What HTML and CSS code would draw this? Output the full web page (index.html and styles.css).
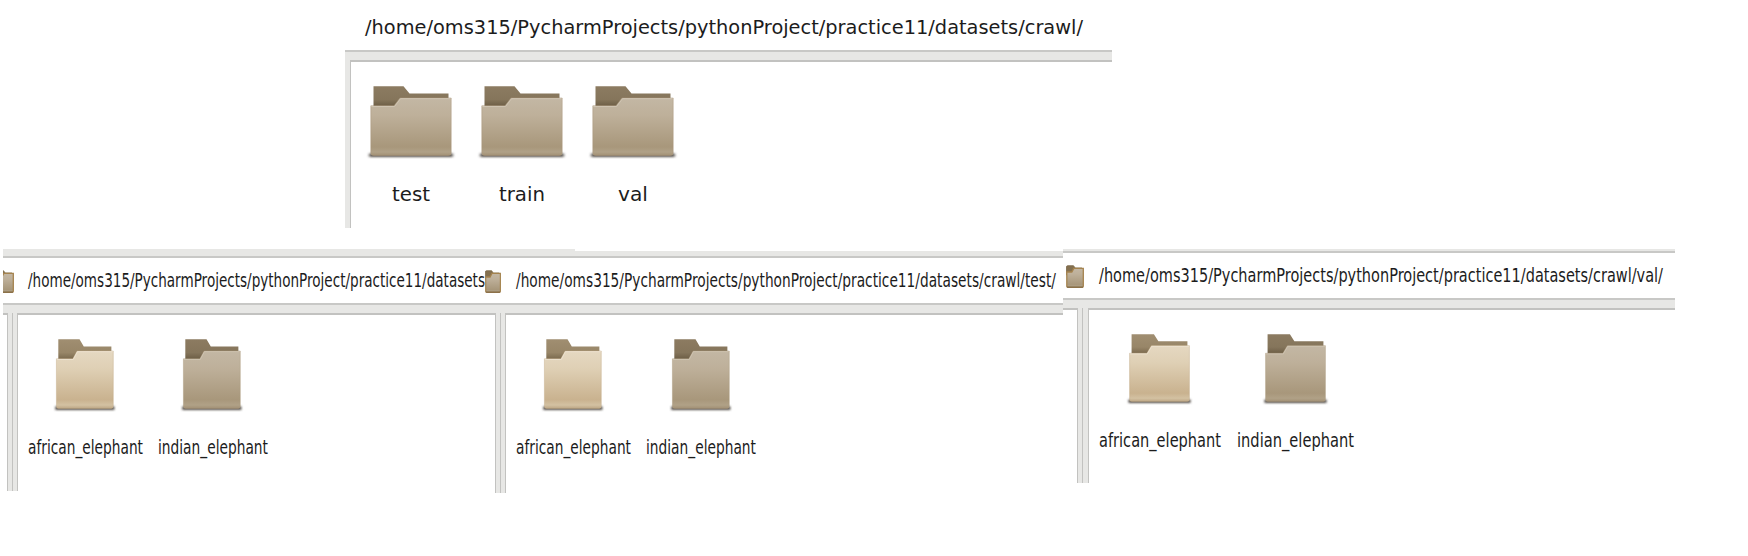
FILE: index.html
```html
<!DOCTYPE html>
<html lang="en">
<head>
<meta charset="utf-8">
<title>Dataset folders</title>
<link rel="stylesheet" href="styles.css">
</head>
<body>
<svg class="defs" width="0" height="0" aria-hidden="true">
  <defs>
    <linearGradient id="back" x1="0" y1="0" x2="0" y2="1"><stop offset="0" stop-color="#8c7b61"/><stop offset=".35" stop-color="#85755b"/><stop offset=".52" stop-color="#6d5e46"/></linearGradient>
    <linearGradient id="backLight" x1="0" y1="0" x2="0" y2="1"><stop offset="0" stop-color="#a08e71"/><stop offset=".35" stop-color="#988668"/><stop offset=".52" stop-color="#7b6a4e"/></linearGradient>
    <linearGradient id="front" x1="0" y1="0" x2="0" y2="1"><stop offset="0" stop-color="#c3b7a4"/><stop offset=".3" stop-color="#beb09a"/><stop offset=".85" stop-color="#a8977b"/><stop offset=".94" stop-color="#b0a187"/><stop offset="1" stop-color="#a29074"/></linearGradient>
    <linearGradient id="frontLight" x1="0" y1="0" x2="0" y2="1"><stop offset="0" stop-color="#e5d8c1"/><stop offset=".3" stop-color="#dfd0b5"/><stop offset=".85" stop-color="#c9b28f"/><stop offset=".94" stop-color="#d3c1a2"/><stop offset="1" stop-color="#bda684"/></linearGradient>
    <filter id="soft" x="-10%" y="-100%" width="120%" height="300%"><feGaussianBlur stdDeviation="1.6 0.9"/></filter>
  </defs>
  <symbol id="folder" viewBox="0 0 90 76" preserveAspectRatio="none">
    <rect x="3" y="69.3" width="84" height="3.6" rx="1.5" fill="#55504a" filter="url(#soft)"/>
    <path d="M7.5 2.3H37.5L43.5 9.6H82.5V40H7.5Z" fill="url(#back)"/>
    <path d="M4.8 21.8H28L34 14H85.2V69Q85.2 71.5 82.5 71.5H7.5Q4.8 71.5 4.8 69Z" fill="url(#front)" stroke="#a9977b" stroke-width=".5"/>
    <path d="M5.4 22.5H28.6L34.6 14.7H84.5" fill="none" stroke="#cfc4b2" stroke-width="1"/>
  </symbol>
  <symbol id="folder-light" viewBox="0 0 90 76" preserveAspectRatio="none">
    <rect x="3" y="69.3" width="84" height="3.6" rx="1.5" fill="#55504a" filter="url(#soft)"/>
    <path d="M7.5 2.3H37.5L43.5 9.6H82.5V40H7.5Z" fill="url(#backLight)"/>
    <path d="M4.8 21.8H28L34 14H85.2V69Q85.2 71.5 82.5 71.5H7.5Q4.8 71.5 4.8 69Z" fill="url(#frontLight)" stroke="#c2ab86" stroke-width=".5"/>
    <path d="M5.4 22.5H28.6L34.6 14.7H84.5" fill="none" stroke="#ede3d1" stroke-width="1"/>
  </symbol>
  <symbol id="folder-small" viewBox="0 0 18 23" preserveAspectRatio="none">
    <path d="M.5 2Q.5.7 1.7.7H7.5L9.2 3H16V10H.5Z" fill="#84704f" stroke="#7b6748" stroke-width=".8"/>
    <path d="M.8 7H5.8L7.8 3.4H17.3V21.3Q17.3 22.3 16.2 22.3H2Q.8 22.3 .8 21.3Z" fill="url(#front)" stroke="#a5834e" stroke-width="1.3"/>
    <path d="M1 22.1H17" stroke="#7b6546" stroke-width="1"/>
  </symbol>
</svg>

<main class="page">
  <section class="panel panel-root">
    <div class="address"><svg class="path" width="718" height="24"><text x="0" y="18" textLength="718" lengthAdjust="spacingAndGlyphs">/home/oms315/PycharmProjects/pythonProject/practice11/datasets/crawl/</text></svg></div>
    <div class="bar"></div>
    <div class="body">
      <div class="gutter"></div>
      <div class="files">
        <div class="file"><svg class="icon"><use href="#folder"/></svg><svg class="label" width="38" height="24"><text y="18" textLength="38" lengthAdjust="spacingAndGlyphs">test</text></svg></div>
        <div class="file"><svg class="icon"><use href="#folder"/></svg><svg class="label" width="45" height="24"><text y="18" textLength="46" lengthAdjust="spacingAndGlyphs">train</text></svg></div>
        <div class="file"><svg class="icon"><use href="#folder"/></svg><svg class="label" width="29" height="24"><text y="18" textLength="30" lengthAdjust="spacingAndGlyphs">val</text></svg></div>
      </div>
    </div>
  </section>

  <div class="row">
    <section class="panel panel-train">
      <div class="strip"></div>
      <div class="address"><svg class="mini" viewBox="7 0 11 23" preserveAspectRatio="none"><use href="#folder-small" width="18" height="23"/></svg><svg class="path" width="457" height="24"><text y="18" textLength="457" lengthAdjust="spacingAndGlyphs">/home/oms315/PycharmProjects/pythonProject/practice11/datasets</text></svg></div>
      <div class="bar"></div>
      <div class="body">
        <div class="side"></div>
        <div class="gutter"></div>
        <div class="files">
          <div class="file"><svg class="icon"><use href="#folder-light"/></svg><svg class="label" width="115" height="24"><text y="18" textLength="115" lengthAdjust="spacingAndGlyphs">african_elephant</text></svg></div>
          <div class="file"><svg class="icon"><use href="#folder"/></svg><svg class="label" width="110" height="24"><text y="18" textLength="110" lengthAdjust="spacingAndGlyphs">indian_elephant</text></svg></div>
        </div>
      </div>
    </section>

    <section class="panel panel-test">
      <div class="strip"><div class="strip-raised"></div></div>
      <div class="address"><svg class="mini"><use href="#folder-small"/></svg><svg class="path" width="540" height="24"><text y="18" textLength="540" lengthAdjust="spacingAndGlyphs">/home/oms315/PycharmProjects/pythonProject/practice11/datasets/crawl/test/</text></svg></div>
      <div class="bar"></div>
      <div class="body">
        <div class="side"></div>
        <div class="gutter"></div>
        <div class="files">
          <div class="file"><svg class="icon"><use href="#folder-light"/></svg><svg class="label" width="115" height="24"><text y="18" textLength="115" lengthAdjust="spacingAndGlyphs">african_elephant</text></svg></div>
          <div class="file"><svg class="icon"><use href="#folder"/></svg><svg class="label" width="110" height="24"><text y="18" textLength="110" lengthAdjust="spacingAndGlyphs">indian_elephant</text></svg></div>
        </div>
      </div>
    </section>

    <section class="panel panel-val">
      <div class="strip"></div>
      <div class="address"><svg class="mini"><use href="#folder-small"/></svg><svg class="path" width="564" height="24"><text y="18" textLength="564" lengthAdjust="spacingAndGlyphs">/home/oms315/PycharmProjects/pythonProject/practice11/datasets/crawl/val/</text></svg></div>
      <div class="bar"></div>
      <div class="body">
        <div class="side"></div>
        <div class="gutter"></div>
        <div class="files">
          <div class="file"><svg class="icon"><use href="#folder-light"/></svg><svg class="label" width="122" height="24"><text y="18" textLength="122" lengthAdjust="spacingAndGlyphs">african_elephant</text></svg></div>
          <div class="file"><svg class="icon"><use href="#folder"/></svg><svg class="label" width="117" height="24"><text y="18" textLength="117" lengthAdjust="spacingAndGlyphs">indian_elephant</text></svg></div>
        </div>
      </div>
    </section>
  </div>
</main>
</body>
</html>
```
FILE: styles.css
```css
* { box-sizing: border-box; }
body { margin: 0; background: #fff; overflow: hidden; font-family: "DejaVu Sans", sans-serif; }
.defs { display: block; height: 0; }
.page { width: 1748px; height: 556px; display: flex; flex-direction: column; }
svg { display: block; flex: none; overflow: visible; }
text { font-size: 19px; fill: #1c1c1c; }

.panel { display: flex; flex-direction: column; flex: none; background: #fff; }
.address { display: flex; flex: none; }
.bar { flex: none; height: 10px; background: #e7e7e5; border-top: 2px solid #c8c8c6; }
.body { display: flex; flex: 1; }
.side { border: solid #c2c2c0; border-width: 2px 1px 0 0; flex: none; }
.gutter { flex: none; background: #e7e7e5; }
.files { flex: 1; display: flex; align-items: flex-start; border: solid #c2c2c0; border-width: 2px 0 0 1px; }
.file { display: flex; flex-direction: column; align-items: center; flex: none; }
.strip { flex: none; background: #e7e7e5; border-bottom: 2px solid #c8c8c6; }

.panel-root { width: 767px; height: 228px; margin-left: 345px; }
.panel-root .address { height: 50px; padding: 16px 0 0 19.5px; }
.panel-root .gutter { width: 5px; }
.panel-root .files { padding: 22px 0 0 14px; }
.panel-root .file { width: 111px; padding-right: 20px; }
.panel-root .icon { width: 90px; height: 76px; margin-bottom: 22.5px; }

.row { display: flex; align-items: flex-start; padding: 21px 0 0 3px; }
.panel-train .address, .panel-test .address { height: 45px; }
.panel-train .icon, .panel-test .icon { width: 63.7px; height: 76px; margin: 0 1px 22.7px 0; }
.panel-train .files, .panel-test .files { padding-top: 22px; gap: 14.5px; }
.panel-train .gutter, .panel-test .gutter { width: 9px; border-left: 4px solid #e7e7e5; box-shadow: inset 1px 0 #c2c2c0; }

.panel-train { width: 482px; height: 242px; }
.panel-train .strip { height: 9px; }
.panel-train .mini { width: 11px; height: 23px; margin: 12px 14px 0 0; overflow: hidden; }
.panel-train .path { margin-top: 10.7px; }
.panel-train .side { width: 5px; }
.panel-train .files { padding-left: 10px; }

.panel-test { width: 578px; height: 244px; }
.panel-test .strip { height: 9px; border-top: 2px solid #fff; }
.panel-test .strip-raised { width: 90px; height: 2px; margin-top: -2px; background: #e7e7e5; }
.panel-test .mini { width: 16px; height: 23px; margin: 12px 14.5px 0 0; }
.panel-test .path { margin-top: 10.7px; }
.panel-test .side { width: 11px; }
.panel-test .files { padding-left: 10px; }
.panel-test .files { gap: 15px; }

.panel-val { width: 612px; height: 234px; }
.panel-val .strip { height: 4px; }
.panel-val .address { height: 45px; padding-left: 2.5px; }
.panel-val .mini { width: 18px; height: 23px; margin: 12px 15.5px 0 0; }
.panel-val .path { margin-top: 11px; }
.panel-val .side { width: 15px; }
.panel-val .gutter { width: 10px; border-left: 4px solid #e7e7e5; box-shadow: inset 1px 0 #c2c2c0; }
.panel-val .files { padding: 22px 0 0 10px; gap: 16px; }
.panel-val .icon { width: 67px; height: 74px; margin: 0 1px 23.3px 0; }
```
